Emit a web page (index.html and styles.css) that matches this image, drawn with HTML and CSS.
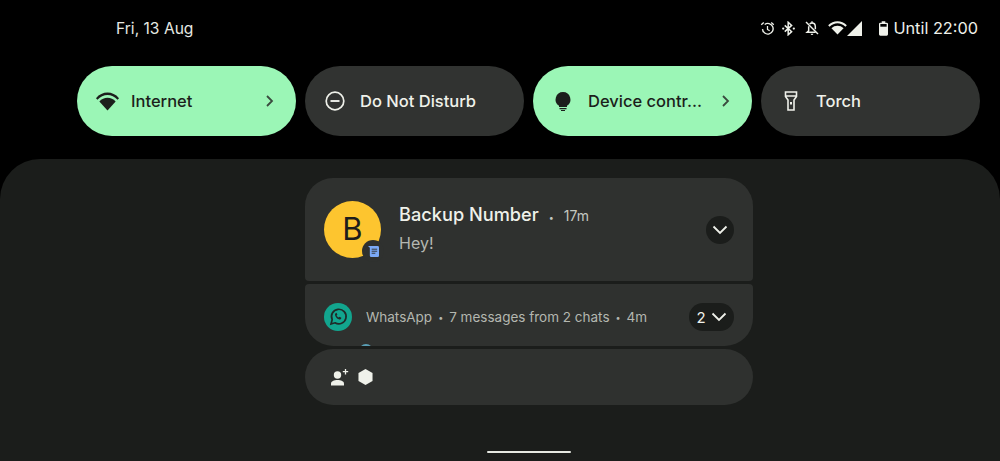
FILE: index.html
```html
<!DOCTYPE html>
<html lang="en">
<head>
  <meta charset="UTF-8">
  <title>Notifications</title>
  <link rel="stylesheet" href="styles.css">
</head>
<body>

  <div class="status">
    <span class="date">Fri, 13 Aug</span>
    <div class="status-icons">
      <svg class="ic-alarm" viewBox="0 0 24 24"><path d="M6 2.500 2 6M18 2.500 22 6" fill="none" stroke="currentColor" stroke-width="2.200"/><path d="M7.500 5.500A8.500 8.500 0 1 1 4 13" fill="none" stroke="currentColor" stroke-width="2.200"/><path d="M12 8v5.500l3.500 2" fill="none" stroke="currentColor" stroke-width="2"/></svg>
      <svg class="ic-bt" viewBox="0 0 24 24"><path d="M6 7l11 10-5.500 5V2l5.500 5L6 17" fill="none" stroke="currentColor" stroke-width="2.400"/><circle cx="3.500" cy="12" r="1.800" fill="currentColor"/><circle cx="20.500" cy="12" r="1.800" fill="currentColor"/></svg>
      <svg class="ic-bell" viewBox="0 0 24 24"><path d="M7 9.500V16l-2.500 2.500h13M8.500 6C9.500 5 10.500 4.500 12 4.500c3 0 5 2.200 5 5.500v4" fill="none" stroke="currentColor" stroke-width="2.200"/><path d="M10 20.500h4a2 2 0 0 1-4 0zM11 2h2v3h-2z" fill="currentColor"/><path d="M3 3l18 18" stroke="currentColor" stroke-width="2.200"/></svg>
      <svg class="ic-wifi" viewBox="0 0 24 18"><path d="M0 5.500C6.500-1.500 17.500-1.500 24 5.500l-1.800 2C16.500 1.500 7.500 1.500 1.800 7.500z" fill="currentColor"/><path d="M4.200 9.200C8.500 5 15.500 5 19.800 9.200L12 17.500z" fill="currentColor"/></svg>
      <svg class="ic-signal" viewBox="0 0 15 15"><path d="M15 0v15H0z" fill="currentColor"/></svg>
      <div class="battery-wrap">
        <svg class="ic-batt" viewBox="0 0 10 16"><path d="M3 0h4v1.500h1.500A1.500 1.500 0 0 1 10 3v11.500A1.500 1.500 0 0 1 8.500 16h-7A1.500 1.500 0 0 1 0 14.500V3a1.500 1.500 0 0 1 1.500-1.500H3z" fill="currentColor"/><path d="M1.500 3h7v3h-7z" fill="#000"/></svg>
        <span class="until">Until 22:00</span>
      </div>
    </div>
  </div>

  <div class="tiles">
    <div class="tile on">
      <svg class="tile-icon wifi" viewBox="0 0 24 19"><path d="M0 6C6.500-1.700 17.500-1.700 24 6l-1.500 1.700C16.500 1.200 7.500 1.200 1.500 7.700z" fill="currentColor"/><path d="M3.500 9.500C8 4.300 16 4.300 20.500 9.500L12 19z" fill="currentColor"/></svg>
      <span class="tile-label">Internet</span>
      <svg class="chev" viewBox="0 0 10 14"><path d="M2 2l5 5-5 5" fill="none" stroke="currentColor" stroke-width="1.800"/></svg>
    </div>
    <div class="tile">
      <svg class="tile-icon" viewBox="0 0 20 20"><circle cx="10" cy="10" r="8.800" fill="none" stroke="currentColor" stroke-width="1.700"/><path d="M5.500 10h9" stroke="currentColor" stroke-width="1.900"/></svg>
      <span class="tile-label">Do Not Disturb</span>
    </div>
    <div class="tile on">
      <svg class="tile-icon" viewBox="0 0 20 20"><path d="M10 1a7.500 7.500 0 0 1 4 13.800V16H6v-1.200A7.500 7.500 0 0 1 10 1z" fill="currentColor"/><path d="M6.500 17h7v1.300h-7zM8 19h4v1H8z" fill="currentColor"/></svg>
      <span class="tile-label">Device contr...</span>
      <svg class="chev" viewBox="0 0 10 14"><path d="M2 2l5 5-5 5" fill="none" stroke="currentColor" stroke-width="1.800"/></svg>
    </div>
    <div class="tile">
      <svg class="tile-icon" viewBox="0 0 20 20"><path d="M4.500 1h11v4.500l-2.500 3.500v10H7V9L4.500 5.500zM5 5h10" fill="none" stroke="currentColor" stroke-width="1.600"/><path d="M9 11h2v2.500H9z" fill="currentColor"/></svg>
      <span class="tile-label">Torch</span>
    </div>
  </div>

  <div class="panel">
    <div class="stack">

      <div class="card card-msg">
        <div class="avatar"><span class="initial">B</span>
          <span class="badge">
            <svg viewBox="0 0 12 12"><path d="M0 0h10.500A1.500 1.500 0 0 1 12 1.500v9a1.500 1.500 0 0 1-1.500 1.500h-7A1.500 1.500 0 0 1 2 10.500V2z" fill="#7baaf7"/><path d="M4 3.500h6M4 5.700h6M4 7.900h4" stroke="#2f312f" stroke-width="1"/></svg>
          </span>
        </div>
        <div class="msg-text">
          <div class="msg-head"><span class="sender">Backup Number</span><span class="dot">•</span><span class="age">17m</span></div>
          <div class="msg-body">Hey!</div>
        </div>
        <span class="expand">
          <svg viewBox="0 0 16 10"><path d="M1.500 1.500 8 8l6.500-6.500" fill="none" stroke="currentColor" stroke-width="1.800"/></svg>
        </span>
      </div>

      <div class="card card-group">
        <div class="group-row">
          <svg class="wa" viewBox="0 0 28 28"><circle cx="14" cy="14" r="14" fill="#12a58e"/><path d="M7 21l1.200-4.300A7.300 7.300 0 1 1 11 19.800z" fill="none" stroke="#1f2a28" stroke-width="1.700"/><path d="M11.300 10.500c-.8 1 0 3 1.400 4.400 1.400 1.300 3.300 2 4.300 1.200l.4-1.300-1.900-1-.8.800c-.9-.4-1.700-1.200-2.100-2.100l.8-.8-.9-1.900z" fill="#1f2a28"/></svg>
          <span class="group-text">WhatsApp<span class="dot">•</span>7 messages from 2 chats<span class="dot">•</span>4m</span>
          <span class="expand count">2
            <svg viewBox="0 0 16 10"><path d="M1.500 1.500 8 8l6.500-6.500" fill="none" stroke="currentColor" stroke-width="1.800"/></svg>
          </span>
        </div>
        <div class="peek"></div>
      </div>

      <div class="card card-shelf">
        <svg class="ic-person" viewBox="0 0 18 17"><circle cx="6.500" cy="6" r="3.700" fill="currentColor"/><path d="M0 16.500v-2c0-2.300 3-3.500 6.500-3.500s6.500 1.200 6.500 3.500v2z" fill="currentColor"/><path d="M14.500 0v5.500M11.800 2.700h5.400" stroke="currentColor" stroke-width="1.300"/></svg>
        <svg class="ic-hex" viewBox="0 0 16 17"><path d="M8 0l7.500 4.200v8.600L8 17 .5 12.800V4.200z" fill="currentColor"/></svg>
      </div>

    </div>
    <div class="handle"></div>
  </div>

</body>
</html>
```

FILE: styles.css
```css
* {
  box-sizing: border-box;
}
html, body {
  margin: 0;
  height: 100%;
}
body {
  display: flex;
  flex-direction: column;
  overflow: hidden;
  background-color: #000;
  font-family: Inter, Roboto, sans-serif;
  color: #eff1ea;
}

/* status bar */
.status {
  display: flex;
  align-items: center;
  justify-content: space-between;
  height: 56px;
  padding: 0 22px 0 116px;
  font-size: 15.600px;
}
.date {
  color: #e6e8e2;
}
.status-icons {
  display: flex;
  align-items: center;
}
.status-icons svg {
  display: block;
}
.ic-alarm { width: 15px; height: 15px; margin-right: 6px; }
.ic-bt { width: 15px; height: 15px; margin-right: 8px; }
.ic-bell { width: 16px; height: 16px; margin-right: 8px; }
.ic-wifi { width: 19px; height: 14px; }
.ic-signal { width: 15px; height: 15px; }
.battery-wrap {
  display: flex;
  align-items: center;
  margin-left: 17px;
}
.ic-batt { width: 9px; height: 15px; margin-right: 5px; }
.until {
  font-size: 16.300px;
}

/* quick settings */
.tiles {
  display: flex;
  gap: 9px;
  height: 70px;
  margin: 10px 20px 0 77px;
}
.tile {
  display: flex;
  flex: 1;
  align-items: center;
  padding: 0 20px;
  border-radius: 35px;
  background-color: #313331;
  color: #eff1ea;
}
.tile.on {
  background-color: #9bf6b6;
  color: #1c1f1c;
}
.tile-icon {
  flex: none;
  width: 20px;
  height: 20px;
  margin-right: 15px;
}
.tile-icon.wifi {
  width: 23px;
  height: 19px;
  margin-left: -1px;
  margin-right: 12px;
}
.tile-label {
  flex: 1;
  font-size: 16.500px;
  font-weight: 500;
  white-space: nowrap;
}
.chev {
  flex: none;
  width: 10px;
  height: 14px;
  margin-right: 1px;
  color: #3a4a3e;
}

/* notification panel */
.panel {
  display: flex;
  flex: 1;
  flex-direction: column;
  align-items: center;
  margin-top: 23px;
  padding: 19px 0 0 58px;
  border-radius: 40px 40px 0 0;
  background-color: #1b1d1b;
}
.stack {
  display: flex;
  flex-direction: column;
  gap: 3px;
  width: 448px;
}
.card {
  background-color: #2f312f;
}
.card-msg {
  display: flex;
  align-items: center;
  height: 103px;
  padding: 0 19px;
  border-radius: 28px 28px 4px 4px;
}
.avatar {
  position: relative;
  display: flex;
  flex: none;
  align-items: center;
  justify-content: center;
  width: 57px;
  height: 57px;
  padding-bottom: 2px;
  border-radius: 50%;
  background-color: #fdc52f;
  color: #1d1d1b;
  font-size: 31px;
}
.badge {
  position: absolute;
  right: -3px;
  bottom: -4px;
  display: flex;
  align-items: center;
  justify-content: center;
  width: 22px;
  height: 22px;
  border-radius: 50%;
  background-color: #2f312f;
}
.badge svg {
  width: 11px;
  height: 11px;
}
.msg-text {
  flex: 1;
  margin-left: 18px;
}
.msg-head {
  display: flex;
  align-items: baseline;
  margin-top: -4px;
}
.sender {
  font-size: 18.200px;
  font-weight: 500;
}
.msg-head .dot {
  margin: 0 10px;
  color: #c4c7c0;
  font-size: 9px;
}
.age {
  color: #c4c7c0;
  font-size: 14px;
}
.msg-body {
  margin-top: 8px;
  color: #b4b7b0;
  font-size: 16px;
}
.expand {
  display: flex;
  flex: none;
  align-items: center;
  justify-content: center;
  width: 28px;
  height: 28px;
  border-radius: 14px;
  background-color: #1b1d1b;
  color: #eff1ea;
}
.expand svg {
  width: 16px;
  height: 10px;
}
.expand.count {
  width: 45px;
  gap: 5px;
  font-size: 15px;
}

.card-group {
  height: 62px;
  padding: 19px 19px 0;
  overflow: hidden;
  border-radius: 4px 4px 28px 28px;
}
.group-row {
  display: flex;
  align-items: center;
}
.wa {
  flex: none;
  width: 28px;
  height: 28px;
}
.group-text {
  flex: 1;
  margin-left: 14px;
  color: #b4b7b0;
  font-size: 13.500px;
}
.group-text .dot {
  margin: 0 6px;
  font-size: 9px;
  vertical-align: 1px;
}
.peek {
  width: 14px;
  height: 14px;
  margin: 13px 0 0 35px;
  border-radius: 50%;
  background-color: #5a9fb5;
}

.card-shelf {
  display: flex;
  align-items: center;
  gap: 9px;
  height: 56px;
  padding: 0 26px;
  border-radius: 28px;
  color: #eff1ea;
}
.ic-person {
  width: 18px;
  height: 17px;
}
.ic-hex {
  width: 15px;
  height: 16px;
}

.handle {
  width: 84px;
  height: 2px;
  margin-top: 46px;
  border-radius: 1px;
  background-color: #e6e8e2;
}
```
